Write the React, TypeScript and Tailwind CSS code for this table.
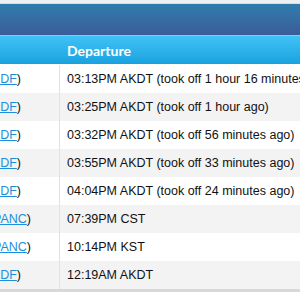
const rows = [
  { code: 'PAGDF', time: '03:13PM AKDT (took off 1 hour 16 minutes ago)' },
  { code: 'PAGDF', time: '03:25PM AKDT (took off 1 hour ago)' },
  { code: 'PAGDF', time: '03:32PM AKDT (took off 56 minutes ago)' },
  { code: 'PAGDF', time: '03:55PM AKDT (took off 33 minutes ago)' },
  { code: 'PAGDF', time: '04:04PM AKDT (took off 24 minutes ago)' },
  { code: 'PANC', time: '07:39PM CST' },
  { code: 'PANC', time: '10:14PM KST' },
  { code: 'PAGDF', time: '12:19AM AKDT' },
]

export default function App() {
  return (
    <div className="w-[300px] h-[300px] overflow-hidden bg-white" style={{ fontFamily: '"Liberation Sans", Arial, sans-serif' }}>
      <div className="h-[4px] bg-[#eef1f4] border-b border-[#d6dde4]"></div>
      <div className="h-[31px] bg-gradient-to-b from-[#2e7cad] to-[#3b5c99]"></div>
      <div className="h-[29px] flex bg-gradient-to-b from-[#3ec2f6] to-[#19a2df] border-t border-[#6fd3fa]">
        <div className="w-[60px] shrink-0"></div>
        <div className="pl-[7px] pt-[1px] flex items-center text-white text-[14px] font-bold" style={{ fontFamily: 'Lato, "Open Sans", sans-serif' }}>
          Departure
        </div>
      </div>
      <div className="border-t border-white">
        {rows.map((r, i) => (
          <div key={i} className={'h-[28px] flex items-center text-[12.5px] text-[#111] ' + (i % 2 === 1 ? 'bg-[#f3f3f3]' : 'bg-white')}>
            <div className="w-[60px] shrink-0 h-full flex items-center justify-end overflow-hidden whitespace-nowrap border-r border-[#e2e2e2]">
              <span className={r.code === 'PANC' ? 'mr-[28px]' : 'mr-[38px]'}>
                (<a className="text-[#1b8fdd] underline">{r.code}</a>)
              </span>
            </div>
            <div className="pl-[7px] whitespace-nowrap">{r.time}</div>
          </div>
        ))}
      </div>
      <div className="h-[3px] bg-[#d8d8d8]"></div>
    </div>
  )
}
